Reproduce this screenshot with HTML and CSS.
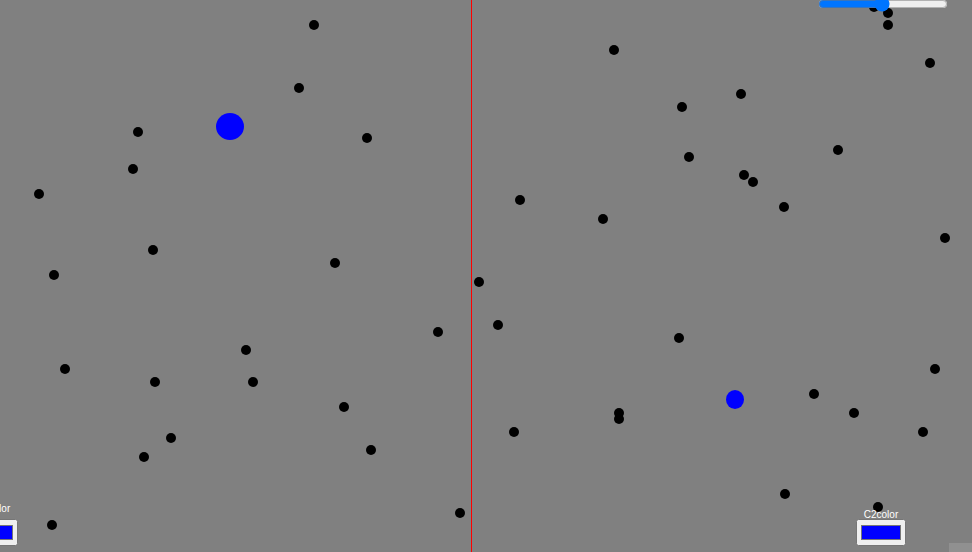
FILE: index.html
```html
<!DOCTYPE html>
<html lang="en">
<head>
<meta charset="utf-8">
<title>Two players</title>
<link rel="stylesheet" href="styles.css">
</head>
<body>
<main class="board">
<svg class="field" aria-hidden="true">
<g id="dots"></g>
<path class="divider" d="M471.5 0V2000"/>
<ellipse class="player" cx="230" cy="126.500" rx="14" ry="13.500"/>
<ellipse class="player" cx="735" cy="399.500" rx="9" ry="9.500"/>
</svg>
<input class="speed" type="range" min="0" max="100" value="49" aria-label="Speed">
<div class="picker first"><label for="c1">C1color</label><input id="c1" type="color" value="#0000ff"></div>
<div class="picker second"><label for="c2">C2color</label><input id="c2" type="color" value="#0000ff"></div>
<div class="corner"></div>
</main>
<script src="script.js"></script>
</body>
</html>
```

FILE: styles.css
```css
body {
  margin: 0;
  background: #808080;
  font-family: "Liberation Sans", Arial, sans-serif;
}

.board {
  position: relative;
  height: 100vh;
  overflow: hidden;
}

.field {
  display: block;
  width: 100%;
  height: 100%;
}

.divider {
  stroke: #f00;
  stroke-width: 1px;
}

.player {
  fill: #00f;
}

.speed {
  position: absolute;
  top: -4px;
  right: 24px;
  width: 130px;
  margin: 0;
}

.picker {
  position: absolute;
  bottom: 6px;
  display: flex;
  flex-direction: column;
  align-items: center;
  width: 50px;
  color: #fff;
  font-size: 10px;
  line-height: 8px;
}

.picker input {
  box-sizing: border-box;
  width: 50px;
  height: 27px;
}

.first {
  left: -32px;
  gap: 6px;
}

.second {
  right: 66px;
}

.corner {
  position: absolute;
  right: 0;
  bottom: 0;
  width: 23px;
  height: 9px;
  background: #909090;
}
```

FILE: script.js
```js
const dots = [
  [314, 25], [299, 88], [138, 132], [133, 169], [39, 194], [367, 138],
  [153, 250], [54, 275], [335, 263], [438, 332], [246, 350], [65, 369],
  [155, 382], [253, 382], [344, 407], [171, 438], [144, 457], [371, 450],
  [460, 513], [52, 525], [614, 50], [682, 107], [741, 94], [689, 157],
  [744, 175], [753, 182], [838, 150], [784, 207], [520, 200], [603, 219],
  [479, 282], [498, 325], [679, 338], [945, 238], [935, 369], [814, 394],
  [854, 413], [923, 432], [619, 413], [619, 419], [514, 432], [785, 494],
  [878, 507], [874, 7], [888, 13], [888, 25], [930, 63]
];
const group = document.getElementById("dots");
for (const [x, y] of dots) {
  const dot = document.createElementNS("http://www.w3.org/2000/svg", "circle");
  dot.setAttribute("cx", x);
  dot.setAttribute("cy", y);
  dot.setAttribute("r", 5);
  group.append(dot);
}
```
